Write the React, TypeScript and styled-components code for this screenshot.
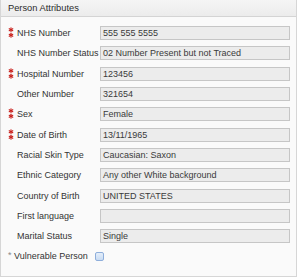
import React from "react";
import styled, { createGlobalStyle } from "styled-components";

const Global = createGlobalStyle`
  html, body { margin: 0; padding: 0; background: #ffffff; }
  body { font-family: "Liberation Sans", Arial, sans-serif; }
`;

const Panel = styled.div`
  width: 297px;
  height: 277px;
  box-sizing: border-box;
  border: 1px solid #d6d6d6;
  border-top: none;
  background: #fafafa;
  display: flex;
  flex-direction: column;
`;

const Header = styled.div`
  height: 17px;
  box-sizing: border-box;
  border-bottom: 1px solid #d4d4d4;
  background: linear-gradient(#f5f5f5, #ececec);
  padding-left: 7px;
  display: flex;
  align-items: center;
  font-size: 9.3px;
  color: #2c2c2c;
`;

const Body = styled.div`
  padding-top: 6px;
  display: flex;
  flex-direction: column;
`;

const Row = styled.div`
  height: 20.3px;
  display: grid;
  grid-template-columns: 9px 83px 190px;
  padding-left: 7px;
  align-items: center;
`;

const Label = styled.span`
  font-size: 9px;
  color: #333;
  white-space: nowrap;
`;

const Field = styled.div`
  height: 14px;
  box-sizing: border-box;
  border: 1px solid #c6c6c6;
  background: #ececec;
  padding-left: 2px;
  font-size: 9px;
  color: #3a3a3a;
  display: flex;
  align-items: center;
  white-space: nowrap;
  overflow: hidden;
`;

const CheckRow = styled.div`
  height: 20.3px;
  display: flex;
  align-items: center;
  padding-left: 7px;
`;

const SoftStar = styled.span`
  font-size: 9px;
  color: #888;
  width: 6px;
  align-self: flex-start;
  margin-top: 4px;
`;

const Check = styled.span`
  width: 9px;
  height: 9px;
  box-sizing: border-box;
  margin-left: 7px;
  border: 1px solid #8eaedb;
  border-radius: 2px;
  background: linear-gradient(#e4eefa, #c9dcf3);
`;

const Star = () => (
  <svg width="6" height="11" viewBox="0 0 6 11">
    <g stroke="#c8201c" strokeWidth="1.1" strokeLinecap="round">
      <line x1="3" y1="0.7" x2="3" y2="4.7" />
      <line x1="1.2" y1="1.7" x2="4.8" y2="3.7" />
      <line x1="1.2" y1="3.7" x2="4.8" y2="1.7" />
      <line x1="3" y1="6.3" x2="3" y2="10.3" />
      <line x1="1.2" y1="7.3" x2="4.8" y2="9.3" />
      <line x1="1.2" y1="9.3" x2="4.8" y2="7.3" />
    </g>
  </svg>
);

const rows: { label: string; value: string; req?: boolean }[] = [
  { label: "NHS Number", value: "555 555 5555", req: true },
  { label: "NHS Number Status", value: "02 Number Present but not Traced" },
  { label: "Hospital Number", value: "123456", req: true },
  { label: "Other Number", value: "321654" },
  { label: "Sex", value: "Female", req: true },
  { label: "Date of Birth", value: "13/11/1965", req: true },
  { label: "Racial Skin Type", value: "Caucasian: Saxon" },
  { label: "Ethnic Category", value: "Any other White background" },
  { label: "Country of Birth", value: "UNITED STATES" },
  { label: "First language", value: "" },
  { label: "Marital Status", value: "Single" },
];

export default function App() {
  return (
    <>
      <Global />
      <Panel>
        <Header>Person Attributes</Header>
        <Body>
          {rows.map((r) => (
            <Row key={r.label}>
              <span>{r.req ? <Star /> : null}</span>
              <Label>{r.label}</Label>
              <Field>{r.value}</Field>
            </Row>
          ))}
          <CheckRow>
            <SoftStar>*</SoftStar>
            <Label>Vulnerable Person</Label>
            <Check />
          </CheckRow>
        </Body>
      </Panel>
    </>
  );
}
